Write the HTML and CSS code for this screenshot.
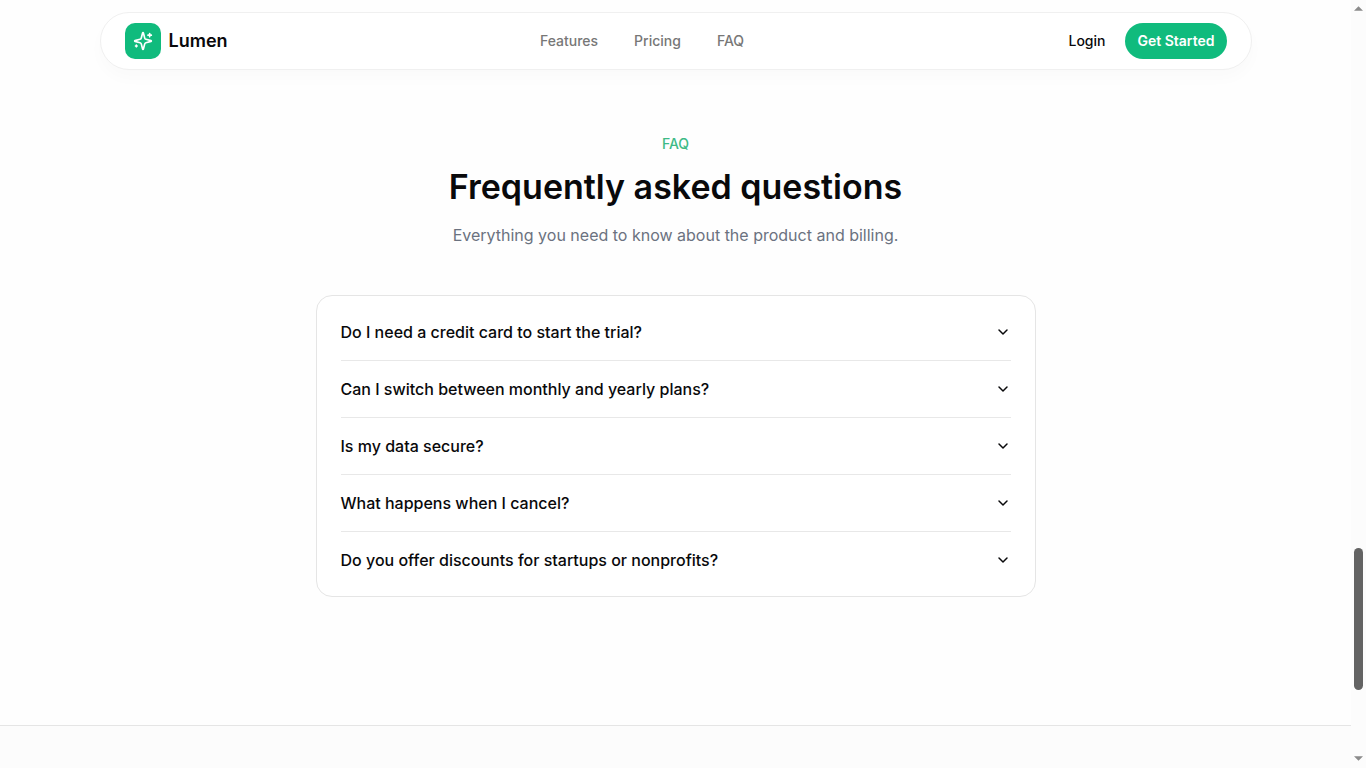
FILE: index.html
```html
<!DOCTYPE html>
<html lang="en">

<head>
    <meta charset="UTF-8">
    <meta name="viewport" content="width=device-width, initial-scale=1.0">
    <title>Lumen</title>
    <link rel="stylesheet" href="styles.css">
</head>

<body>
    <div class="page">
        <header class="navbar">
            <a class="brand" href="#">
                <span class="brand-logo">
                    <svg width="20" height="20" viewBox="0 0 24 24" fill="none" stroke="currentColor" stroke-width="2" stroke-linecap="round" stroke-linejoin="round" aria-hidden="true">
                        <path d="M9.937 15.5A2 2 0 0 0 8.5 14.063l-6.135-1.582a.5.5 0 0 1 0-.962L8.5 9.936A2 2 0 0 0 9.937 8.5l1.582-6.135a.5.5 0 0 1 .963 0L14.063 8.5A2 2 0 0 0 15.5 9.937l6.135 1.581a.5.5 0 0 1 0 .964L15.5 14.063a2 2 0 0 0-1.437 1.437l-1.582 6.135a.5.5 0 0 1-.963 0z" />
                        <path d="M20 3v4M22 5h-4M4 17v2M5 18H3" />
                    </svg>
                </span>
                <span class="brand-name">Lumen</span>
            </a>
            <nav class="nav-links">
                <a href="#features">Features</a>
                <a href="#pricing">Pricing</a>
                <a href="#faq">FAQ</a>
            </nav>
            <div class="nav-actions">
                <a class="login" href="#login">Login</a>
                <button class="get-started" type="button">Get Started</button>
            </div>
        </header>

        <main class="faq" id="faq">
            <p class="eyebrow">FAQ</p>
            <h2>Frequently asked questions</h2>
            <p class="subtitle">Everything you need to know about the product and billing.</p>

            <div class="accordion">
                <details>
                    <summary>Do I need a credit card to start the trial?
                        <svg class="chevron" viewBox="0 0 16 16" aria-hidden="true"><path d="M4 6l4 4 4-4" /></svg>
                    </summary>
                </details>
                <details>
                    <summary>Can I switch between monthly and yearly plans?
                        <svg class="chevron" viewBox="0 0 16 16" aria-hidden="true"><path d="M4 6l4 4 4-4" /></svg>
                    </summary>
                </details>
                <details>
                    <summary>Is my data secure?
                        <svg class="chevron" viewBox="0 0 16 16" aria-hidden="true"><path d="M4 6l4 4 4-4" /></svg>
                    </summary>
                </details>
                <details>
                    <summary>What happens when I cancel?
                        <svg class="chevron" viewBox="0 0 16 16" aria-hidden="true"><path d="M4 6l4 4 4-4" /></svg>
                    </summary>
                </details>
                <details>
                    <summary>Do you offer discounts for startups or nonprofits?
                        <svg class="chevron" viewBox="0 0 16 16" aria-hidden="true"><path d="M4 6l4 4 4-4" /></svg>
                    </summary>
                </details>
            </div>
        </main>

        <footer class="footer"></footer>
    </div>

    <div class="scrollbar" aria-hidden="true">
        <svg class="arrow" viewBox="0 0 10 5"><path d="M0 5L5 0L10 5z" /></svg>
        <div class="track-before"></div>
        <div class="thumb"></div>
        <div class="track-after"></div>
        <svg class="arrow" viewBox="0 0 10 5"><path d="M0 0L5 5L10 0z" /></svg>
    </div>
</body>

</html>
```

FILE: styles.css
```css
* {
    box-sizing: border-box;
}

body {
    margin: 0;
    display: flex;
    height: 100vh;
    overflow: hidden;
    font-family: Inter, sans-serif;
    color: #09090b;
    background-color: #fefefe;
}

a {
    color: inherit;
    text-decoration: none;
}

h2,
p {
    margin: 0;
}

.page {
    flex: 1;
    display: flex;
    flex-direction: column;
    overflow: hidden;
    padding-top: 12px;
}

/* navbar */
.navbar {
    display: flex;
    align-items: center;
    justify-content: space-between;
    width: 100%;
    max-width: 1152px;
    margin: 0 auto;
    padding: 10px 24px;
    border: 1px solid #f0f0f0;
    border-radius: 32px;
    background-color: #fff;
    box-shadow: 0 8px 16px rgba(0, 0, 0, 0.02);
    font-size: 14px;
    line-height: 20px;
    font-weight: 500;
}

.brand {
    display: flex;
    align-items: center;
    gap: 8px;
}

.brand-logo {
    display: flex;
    align-items: center;
    justify-content: center;
    width: 36px;
    height: 36px;
    border-radius: 10px;
    background-color: #10bb7d;
    color: #fff;
}

.brand-name {
    font-size: 18px;
    line-height: 28px;
    font-weight: 600;
}

.nav-links {
    display: flex;
    gap: 36px;
    color: #777;
}

.nav-actions {
    display: flex;
    align-items: center;
    gap: 8px;
}

.login {
    padding: 0 12px;
}

.get-started {
    height: 36px;
    padding: 0 12px;
    border: 0;
    border-radius: 18px;
    background-color: #10bb7d;
    color: #fff;
    font: inherit;
    font-weight: 600;
    cursor: pointer;
}

/* faq */
.faq {
    width: 100%;
    max-width: 768px;
    margin: 0 auto;
    padding: 64px 24px 128px;
    text-align: center;
}

.eyebrow {
    color: #3dba86;
    font-size: 14px;
    line-height: 20px;
    font-weight: 500;
}

h2 {
    margin-top: 12px;
    font-size: 34px;
    line-height: 42px;
    font-weight: 600;
}

.subtitle {
    margin-top: 15px;
    color: #6b7280;
    font-size: 16px;
    line-height: 24px;
}

.accordion {
    margin-top: 48px;
    padding: 8px 24px;
    border: 1px solid #e5e5e5;
    border-radius: 16px;
    background-color: #fff;
    text-align: left;
}

details + details {
    border-top: 1px solid #e8e8e8;
}

summary {
    display: flex;
    align-items: center;
    justify-content: space-between;
    padding: 16px 0;
    font-size: 16px;
    line-height: 24px;
    font-weight: 500;
    list-style: none;
    cursor: pointer;
}

.chevron {
    width: 16px;
    height: 16px;
    fill: none;
    stroke: currentColor;
    stroke-width: 1.5;
    stroke-linecap: round;
    stroke-linejoin: round;
}

.footer {
    flex: 1;
    border-top: 1px solid #e5e5e5;
    background-color: #fcfcfc;
}

/* scrollbar */
.scrollbar {
    display: flex;
    flex-direction: column;
    align-items: center;
    width: 15px;
    padding: 6px 0 7px;
    background-color: #fcfcfc;
}

.arrow {
    width: 9px;
    height: 5px;
    fill: #8b8b8b;
}

.track-before {
    flex: 537;
}

.thumb {
    flex: 142;
    width: 9px;
    border-radius: 5px;
    background-color: #636363;
}

.track-after {
    flex: 66;
}
```
